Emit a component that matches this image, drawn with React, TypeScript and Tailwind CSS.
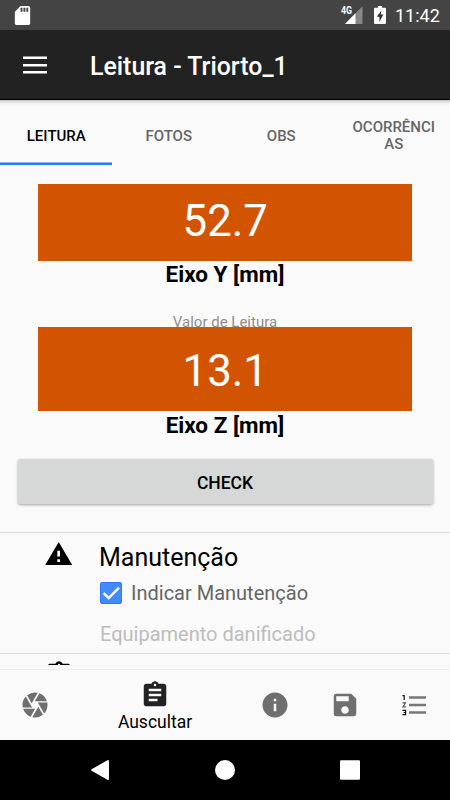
import { MdAssignment, MdCamera, MdInfo, MdSave, MdSdCard } from 'react-icons/md';

function StatusBar() {
  return (
    <div className="flex h-[30px] shrink-0 items-center bg-[#444444] pl-[11px] pr-[10px] text-white">
      <MdSdCard className="size-[23px]" />
      <div className="ml-auto flex h-full items-center">
        <svg className="h-[20px] w-[24px]" viewBox="0 0 24 20">
          <path d="M22.500 1.200V19H5z" fill="#888888" />
          <path d="M15.500 8.300V19H5z" fill="#ffffff" />
          <text x="1" y="9" fontSize="10.500" fontWeight="700" fill="#ffffff" textLength="11" lengthAdjust="spacingAndGlyphs">4G</text>
        </svg>
        <svg className="ml-[10px] h-[18px] w-[12px]" viewBox="0 0 12 18">
          <path d="M4 0h4v1.700h3q1 0 1 1V17q0 1-1 1H1q-1 0-1-1V2.700q0-1 1-1h3z" fill="#ffffff" />
          <path d="M7.600 4.200L2.700 10.700h2.700v5L9.400 8.600H6.700z" fill="#333333" />
        </svg>
        <span className="ml-[9px] mt-[2px] w-[45px] whitespace-nowrap text-[18px] leading-[28px]">11:42</span>
      </div>
    </div>
  );
}

function Tabs() {
  const base = 'flex w-[112.5px] items-center justify-center text-center text-[15px] leading-[17.5px] font-medium';
  return (
    <div className="h-[65px] shrink-0 bg-linear-to-b from-[#c8c8c8] via-[#f2f2f2] via-[5%] to-[#fafafa] to-[10%]">
      <div className="flex h-[62px] pt-[10.500px]">
        <div className={base + ' text-black'}>LEITURA</div>
        <div className={base + ' text-[#666666]'}>FOTOS</div>
        <div className={base + ' text-[#666666]'}>OBS</div>
        <div className={base + ' text-[#666666]'}>OCORRÊNCI<br />AS</div>
      </div>
      <div className="h-[3px] w-[112px] border-t border-[#8fb8fb] bg-[#2979ff]" />
    </div>
  );
}

export default function App() {
  return (
    <div className="flex h-[800px] w-[450px] flex-col overflow-hidden bg-[#fafafa] font-[Roboto,sans-serif] text-black">
      <StatusBar />
      <div className="flex h-[70px] shrink-0 items-center border-b border-black bg-[#222222] pl-[23px] text-white">
        <svg className="h-[18px] w-[24px]" viewBox="0 0 24 18">
          <path d="M0 1.750h24M0 9.250h24M0 16.250h24" stroke="#fff" strokeWidth="2.500" />
        </svg>
        <h1 className="ml-[43px] mt-[4px] text-[24.900px] font-medium leading-[30px]">Leitura - Triorto_1</h1>
      </div>
      <Tabs />
      <main className="flex h-[500px] shrink-0 flex-col overflow-hidden pt-[19px]">
        <div className="ml-[37.500px] h-[77px] w-[374.500px] shrink-0 bg-[#d35400] pl-px text-center text-[43.750px] leading-[74px] text-white">52.7</div>
        <div className="h-[51px] shrink-0 text-center text-[22.500px] font-bold leading-[27px]">Eixo Y [mm]</div>
        <div className="-mb-[6px] h-[21px] shrink-0 text-center text-[15px] leading-[21px] text-[#8e8e8e]">Valor de Leitura</div>
        <div className="relative ml-[37.500px] h-[84px] w-[374.500px] shrink-0 bg-[#d35400] pl-px text-center text-[43.750px] leading-[89px] text-white">13.1</div>
        <div className="h-[48px] shrink-0 text-center text-[22.500px] font-bold leading-[29px]">Eixo Z [mm]</div>
        <button className="ml-[17.500px] h-[45px] w-[415px] shrink-0 rounded-[2px] bg-[#d6d7d7] pt-[3px] text-[17.500px] font-medium shadow-[0_1px_3px_rgba(0,0,0,0.350)]">CHECK</button>
        <section className="mt-[28px] flex h-[122px] shrink-0 border-y border-[#d9d9d9] pl-[44px]">
          <svg className="mt-[6px] size-[30px]" viewBox="0 0 30 30">
            <path d="M1.200 26L14.700 3 28.200 26zM13.300 11.700V17.500H16V11.700zM13.300 20.300V23H16V20.300z" fill="#000" fillRule="evenodd" />
          </svg>
          <div className="ml-[25px]">
            <h2 className="mt-[10px] h-[39px] text-[25px] leading-[30px]">Manutenção</h2>
            <div className="flex h-[23px] items-center pl-px">
              <svg className="mb-[2px] size-[22px]" viewBox="0 0 22 22">
                <rect x="0.500" y="0.500" width="21" height="21" rx="1.500" fill="#448aff" stroke="#2979ff" />
                <path d="M3.500 11.200L8.700 16 19 5.600" fill="none" stroke="#fff" strokeWidth="2.400" />
              </svg>
              <span className="ml-[9px] text-[20px] leading-[23px] text-[#666666]">Indicar Manutenção</span>
            </div>
            <p className="mt-[16px] pl-px text-[20px] leading-[26px] text-[#bdbdbd]">Equipamento danificado</p>
          </div>
        </section>
        <div className="h-[11px] shrink-0 overflow-hidden pl-[44px] pt-[6px]">
          <MdAssignment className="size-[30px]" />
        </div>
      </main>
      <nav className="flex h-[75px] shrink-0 border-t-[4px] border-[#f8f8f8] text-[#6f6f6f] shadow-[inset_0_1px_0_#ececec]">
        <div className="flex w-[70px] items-center justify-center"><MdCamera className="size-[30px]" /></div>
        <div className="flex w-[170px] flex-col items-center pt-[11px] text-[#222222]">
          <MdAssignment className="size-[30px]" />
          <span className="mt-[2px] text-[17.500px] leading-[20px] text-black">Auscultar</span>
        </div>
        <div className="flex w-[70px] items-center justify-center"><MdInfo className="size-[30px]" /></div>
        <div className="flex w-[70px] items-center justify-center"><MdSave className="size-[30px]" /></div>
        <div className="flex w-[70px] items-center justify-center">
          <svg className="size-[30px]" viewBox="0 0 30 30">
            <path d="M9 7.500h17M9 15h17M9 22.500h17" stroke="#777777" strokeWidth="2.600" />
            <path d="M2.500 5.600H4.200V10" fill="none" stroke="#111" strokeWidth="1.200" />
            <path d="M2.500 12.900H5.500L2.900 16.900H6" fill="none" stroke="#555" strokeWidth="1.100" />
            <path d="M2.500 20.300H5.600V24.700H2.500M3.600 22.500H5.600" fill="none" stroke="#111" strokeWidth="1.200" />
          </svg>
        </div>
      </nav>
      <div className="h-[60px] shrink-0 bg-black">
        <svg className="h-[60px] w-[450px]" viewBox="0 0 450 60" fill="#fff">
          <path d="M107.400 20.300q1.600-.9 1.600.9v17.600q0 1.800-1.600.9L92 31q-1.600-1 0-2z" />
          <circle cx="225" cy="30" r="10" />
          <rect x="340" y="20.200" width="20" height="19.600" rx="1" />
        </svg>
      </div>
    </div>
  );
}
